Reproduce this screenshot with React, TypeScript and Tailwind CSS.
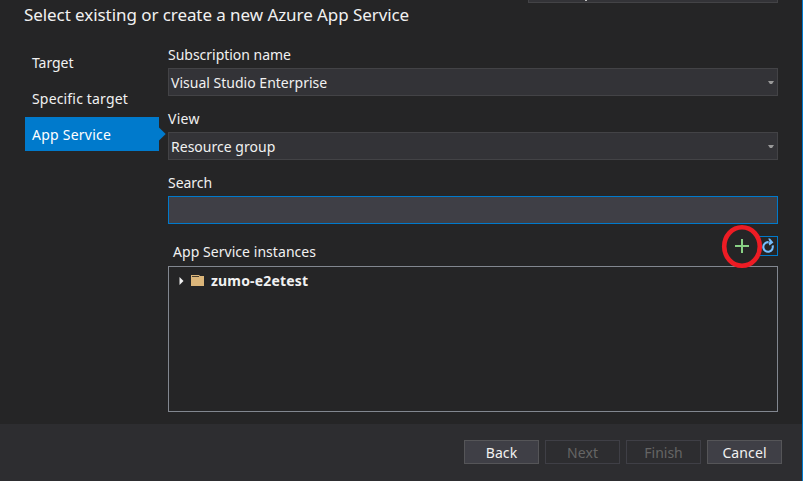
import type { ReactNode } from "react";

function NavItem({ label, tracking, active }: { label: string; tracking: string; active?: boolean }) {
  return (
    <div className={`relative flex h-[34px] items-center pl-[7px] pt-px ${active ? "bg-[#007acc] text-white" : ""}`}>
      <span className={tracking}>{label}</span>
      {active && (
        <svg className="absolute left-full top-[10px]" width="7" height="14" viewBox="0 0 7 14">
          <path d="M0 0.5 L6.7 7 L0 13.5 Z" fill="#007acc" />
        </svg>
      )}
    </div>
  );
}

function Select({ children }: { children: ReactNode }) {
  return (
    <div className="flex h-7 items-center justify-between border border-[#434346] bg-[#333337] pl-[2px] pr-[3px]">
      <div className="pt-px">{children}</div>
      <svg width="6" height="3" viewBox="0 0 6 3">
        <path d="M0 0 H6 L4 3 H2 Z" fill="#999999" />
      </svg>
    </div>
  );
}

function Button({ children, disabled }: { children: ReactNode; disabled?: boolean }) {
  return (
    <button
      disabled={disabled}
      className={`flex h-6 w-[75px] items-center justify-center border pt-px ${
        disabled ? "border-[#3f3f46] bg-[#2d2d30] text-[#656565]" : "border-[#555558] bg-[#3f3f46] text-[#f1f1f1]"
      }`}
    >
      {children}
    </button>
  );
}

export default function App() {
  return (
    <div className="flex h-[481px] w-[803px] flex-col overflow-hidden border-r border-[#007acc] bg-[#252526] font-['Noto_Sans','Open_Sans',sans-serif] text-[14px] leading-5 text-[#f1f1f1]">
      <header className="flex h-[45px] items-start justify-between pl-6 pr-6">
        <h1 className="whitespace-nowrap pt-[3px] text-[17px] leading-6 tracking-[-0.07px]">
          Select existing or create a new Azure App Service
        </h1>
        <div className="h-[3px] w-[250px] border border-t-0 border-[#434346] bg-[#333337] pl-14">
          <div className="h-px w-[2px] bg-[#c0c0c0]" />
        </div>
      </header>

      <main className="flex h-[379px] pl-[25px]">
        <nav className="flex w-[134px] flex-col gap-[2px]">
          <NavItem label="Target" tracking="tracking-[-0.05px]" />
          <NavItem label="Specific target" tracking="tracking-[0.17px]" />
          <NavItem label="App Service" tracking="tracking-[0.24px]" active />
        </nav>

        <section className="ml-[9px] w-[610px]">
          <div className="h-[23px]"><span className="tracking-[-0.02px]">Subscription name</span></div>
          <Select><span className="tracking-[0.01px]">Visual Studio Enterprise</span></Select>
          <div className="mt-[13px] h-[23px]"><span className="tracking-[0.25px]">View</span></div>
          <Select><span className="tracking-[0.02px]">Resource group</span></Select>
          <div className="mt-[13px] h-[23px]"><span className="tracking-[-0.05px]">Search</span></div>
          <div className="h-7 border border-[#007acc] bg-[#3f3f46]" />

          <div className="flex h-[42px] items-start justify-between pl-[5px] pt-3">
            <span className="pt-[6px] tracking-[0.05px]">App Service instances</span>
            <div className="relative flex">
              <svg className="absolute -left-[38px] -top-[12px] z-10" width="42" height="46" viewBox="0 0 42 46">
                <ellipse cx="21" cy="22.5" rx="17.8" ry="19.3" fill="none" stroke="#ed1c24" strokeWidth="4.6" />
                <path d="M21 15 V29 M14 22 H28" stroke="#89d185" strokeWidth="2" />
              </svg>
              <div className="flex h-5 w-[19px] items-center justify-center border border-[#007acc]">
                <svg width="15" height="16" viewBox="0 0 15 16">
                  <path d="M7.6 4.2 A4.8 4.8 0 1 0 11.6 7.4" fill="none" stroke="#75beff" strokeWidth="2.1" />
                  <path d="M7.2 0.6 H9 L12.4 4.4 L8.4 7.4 L7.6 5.2 L8.6 3.6 Z" fill="#75beff" />
                </svg>
              </div>
            </div>
          </div>

          <div className="h-[146px] border border-[#828790] pl-[10px] pt-1">
            <div className="flex h-5 items-center">
              <svg width="5" height="8" viewBox="0 0 5 8"><path d="M0.5 0 L4.5 4 L0.5 8 Z" fill="#f1f1f1" /></svg>
              <svg className="relative -top-px ml-[7px]" width="13" height="11" viewBox="0 0 13 11">
                <path d="M0 0 H8 L9 1 H13 V11 H0 Z" fill="#dcb67a" />
                <path d="M1 1.5 H8" stroke="#4a4030" />
              </svg>
              <span className="ml-[7px] font-bold tracking-[0.17px]">zumo-e2etest</span>
            </div>
          </div>
        </section>
      </main>

      <footer className="flex h-[57px] justify-end gap-[6px] bg-[#2d2d30] pr-5 pt-4">
        <Button><span className="tracking-[0.1px]">Back</span></Button>
        <Button disabled><span className="tracking-[0.1px]">Next</span></Button>
        <Button disabled><span>Finish</span></Button>
        <Button><span className="tracking-[0.1px]">Cancel</span></Button>
      </footer>
    </div>
  );
}
